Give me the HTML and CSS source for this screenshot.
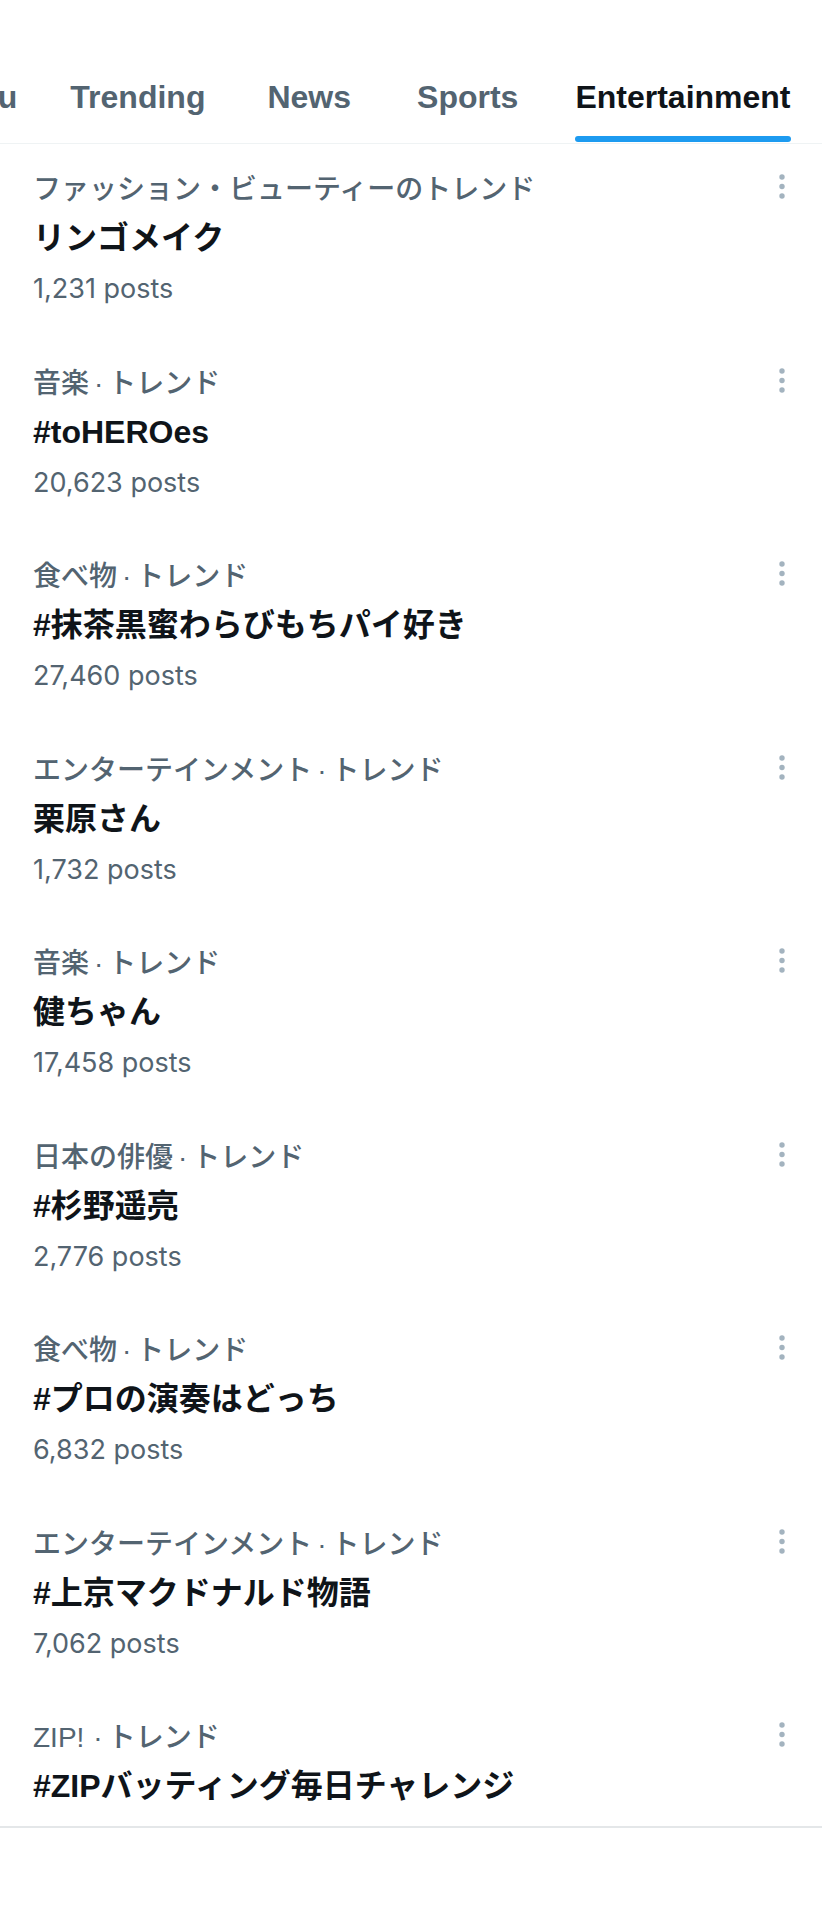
FILE: index.html
```html
<!DOCTYPE html>
<html lang="ja">
<head>
<meta charset="utf-8">
<title>Explore - Entertainment</title>
<link rel="stylesheet" href="styles.css">
</head>
<body>
<div class="page">
  <nav class="tabbar">
    <div class="tabs">
      <div class="tab tab-partial"><span class="label">For you</span><span class="bar"></span></div>
      <div class="tab"><span class="label">Trending</span><span class="bar"></span></div>
      <div class="tab"><span class="label">News</span><span class="bar"></span></div>
      <div class="tab tab-wide"><span class="label">Sports</span><span class="bar"></span></div>
      <div class="tab active"><span class="label">Entertainment</span><span class="bar"></span></div>
    </div>
  </nav>

  <section class="list">
    <div class="trend">
      <div class="info">
        <div class="cat">ファッション・ビューティーのトレンド</div>
        <div class="title">リンゴメイク</div>
        <div class="posts">1,231 posts</div>
      </div>
      <svg class="more" viewBox="0 0 20 30" width="20" height="30"><circle cx="10" cy="5" r="2.7"/><circle cx="10" cy="14.5" r="2.7"/><circle cx="10" cy="24" r="2.7"/></svg>
    </div>
    <div class="trend">
      <div class="info">
        <div class="cat">音楽<span class="sep">·</span>トレンド</div>
        <div class="title">#toHEROes</div>
        <div class="posts">20,623 posts</div>
      </div>
      <svg class="more" viewBox="0 0 20 30" width="20" height="30"><circle cx="10" cy="5" r="2.7"/><circle cx="10" cy="14.5" r="2.7"/><circle cx="10" cy="24" r="2.7"/></svg>
    </div>
    <div class="trend">
      <div class="info">
        <div class="cat">食べ物<span class="sep">·</span>トレンド</div>
        <div class="title">#抹茶黒蜜わらびもちパイ好き</div>
        <div class="posts">27,460 posts</div>
      </div>
      <svg class="more" viewBox="0 0 20 30" width="20" height="30"><circle cx="10" cy="5" r="2.7"/><circle cx="10" cy="14.5" r="2.7"/><circle cx="10" cy="24" r="2.7"/></svg>
    </div>
    <div class="trend">
      <div class="info">
        <div class="cat">エンターテインメント<span class="sep">·</span>トレンド</div>
        <div class="title">栗原さん</div>
        <div class="posts">1,732 posts</div>
      </div>
      <svg class="more" viewBox="0 0 20 30" width="20" height="30"><circle cx="10" cy="5" r="2.7"/><circle cx="10" cy="14.5" r="2.7"/><circle cx="10" cy="24" r="2.7"/></svg>
    </div>
    <div class="trend">
      <div class="info">
        <div class="cat">音楽<span class="sep">·</span>トレンド</div>
        <div class="title">健ちゃん</div>
        <div class="posts">17,458 posts</div>
      </div>
      <svg class="more" viewBox="0 0 20 30" width="20" height="30"><circle cx="10" cy="5" r="2.7"/><circle cx="10" cy="14.5" r="2.7"/><circle cx="10" cy="24" r="2.7"/></svg>
    </div>
    <div class="trend">
      <div class="info">
        <div class="cat">日本の俳優<span class="sep">·</span>トレンド</div>
        <div class="title">#杉野遥亮</div>
        <div class="posts">2,776 posts</div>
      </div>
      <svg class="more" viewBox="0 0 20 30" width="20" height="30"><circle cx="10" cy="5" r="2.7"/><circle cx="10" cy="14.5" r="2.7"/><circle cx="10" cy="24" r="2.7"/></svg>
    </div>
    <div class="trend">
      <div class="info">
        <div class="cat">食べ物<span class="sep">·</span>トレンド</div>
        <div class="title">#プロの演奏はどっち</div>
        <div class="posts">6,832 posts</div>
      </div>
      <svg class="more" viewBox="0 0 20 30" width="20" height="30"><circle cx="10" cy="5" r="2.7"/><circle cx="10" cy="14.5" r="2.7"/><circle cx="10" cy="24" r="2.7"/></svg>
    </div>
    <div class="trend">
      <div class="info">
        <div class="cat">エンターテインメント<span class="sep">·</span>トレンド</div>
        <div class="title">#上京マクドナルド物語</div>
        <div class="posts">7,062 posts</div>
      </div>
      <svg class="more" viewBox="0 0 20 30" width="20" height="30"><circle cx="10" cy="5" r="2.7"/><circle cx="10" cy="14.5" r="2.7"/><circle cx="10" cy="24" r="2.7"/></svg>
    </div>
    <div class="trend trend-last">
      <div class="info">
        <div class="cat">ZIP!<span class="sep sep-latin">·</span>トレンド</div>
        <div class="title">#ZIPバッティング毎日チャレンジ</div>
      </div>
      <svg class="more" viewBox="0 0 20 30" width="20" height="30"><circle cx="10" cy="5" r="2.7"/><circle cx="10" cy="14.5" r="2.7"/><circle cx="10" cy="24" r="2.7"/></svg>
    </div>
  </section>
</div>
</body>
</html>
```

FILE: styles.css
```css
html, body {
  margin: 0;
  padding: 0;
  background: #ffffff;
}

body {
  font-family: "Liberation Sans", "Noto Sans CJK JP", sans-serif;
  color: #0f1419;
}

.page {
  width: 822px;
  overflow: hidden;
}

.tabbar {
  height: 143px;
  border-bottom: 1px solid #eff3f4;
  overflow: hidden;
}

.tabs {
  display: flex;
  gap: 62px;
  margin-left: -100px;
  height: 143px;
}

.tab {
  display: flex;
  flex-direction: column;
  justify-content: flex-end;
  flex: none;
  height: 143px;
}

.tab-partial {
  margin-right: -9px;
}

.tab-wide {
  margin-left: 4px;
  margin-right: -5px;
}

.label {
  font-size: 32px;
  font-weight: 700;
  line-height: 40px;
  color: #536471;
  white-space: nowrap;
}

.bar {
  display: block;
  height: 6px;
  margin-top: 19px;
  margin-bottom: 1px;
  border-radius: 3px;
  background: transparent;
}

.tab.active .label {
  color: #0f1419;
}

.tab.active .bar {
  background: #1d9bf0;
}

.trend {
  display: flex;
  justify-content: space-between;
  align-items: flex-start;
  padding: 28px 30px 30.5px 33px;
}

.info {
  display: flex;
  flex-direction: column;
}

.cat {
  font-size: 28px;
  line-height: 36px;
  font-weight: 500;
  color: #536471;
  white-space: nowrap;
}

.sep {
  margin: 0 5px;
}

.sep-latin {
  margin-left: 9px;
}

.title {
  margin-top: 10px;
  font-size: 32px;
  line-height: 40px;
  font-weight: 700;
  color: #0f1419;
  white-space: nowrap;
}

.posts {
  margin-top: 13px;
  font-family: "Inter", "Liberation Sans", sans-serif;
  font-size: 27px;
  line-height: 36px;
  color: #536471;
}

.more {
  flex: none;
  fill: #a3b3bf;
}

.trend-last {
  padding-bottom: 20px;
  border-bottom: 2px solid #e4e7e9;
}
```
